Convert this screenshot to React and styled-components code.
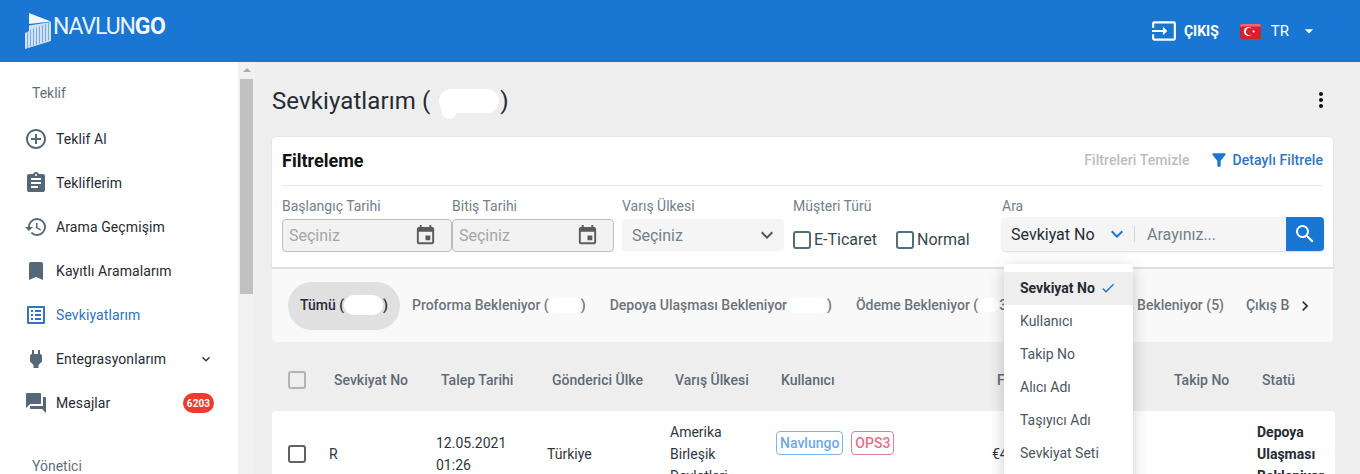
import React from "react";
import styled, { createGlobalStyle } from "styled-components";
import {
  MdAddCircleOutline, MdAssignment, MdHistory, MdBookmark, MdListAlt, MdPower, MdQuestionAnswer,
  MdExpandMore, MdInput, MdArrowDropDown, MdEvent, MdFilterAlt, MdSearch, MdCheck, MdMoreVert, MdChevronRight,
} from "react-icons/md";

const Global = createGlobalStyle`
  html, body { margin: 0; padding: 0; height: 100%; overflow: hidden; }
  body { font-family: Roboto, "Liberation Sans", sans-serif; background: #eeeeee; color: #262b33; }
  * { box-sizing: border-box; }
`;

const Page = styled.div`height: 474px; overflow: hidden; display: flex; flex-direction: column;`;
const Header = styled.header`
  height: 62px; flex: none; background: #1976d2; color: #fff; display: flex; align-items: center;
  padding: 0 41px 0 24px; justify-content: space-between;
`;
const Brand = styled.div`display: flex; align-items: flex-start; height: 36px; margin-top: -1px;`;
const BrandText = styled.div`
  font-family: Roboto, sans-serif; font-size: 23px; line-height: 28px; font-weight: 400; letter-spacing: -1.1px; margin: 0 0 0 2px; color: #eaf2fb;
  b { font-weight: 700; letter-spacing: -.5px; color: #f4f8fd; }
`;
const HeaderRight = styled.div`display: flex; align-items: center;`;
const Logout = styled.div`display: flex; align-items: center; gap: 7px; font-size: 14px; font-weight: 700; margin-right: 21px; svg { display: block; }`;
const Lang = styled.div`font-size: 15px; margin-left: 10px; margin-right: 10px;`;

const Body = styled.div`flex: 1; display: flex; min-height: 0;`;
const Side = styled.aside`width: 238px; flex: none; background: #fff; padding: 18px 24px 0 26px;`;
const SideLabel = styled.div`
  font-size: 14px; color: #5f6f7d; line-height: 26px; padding-left: 6px;
  margin-top: ${p => p.$top || 0}px; margin-bottom: 11px;
`;
const NavItem = styled.div`
  height: 44px; display: flex; align-items: center; font-size: 14px; letter-spacing: .1px;
  color: ${p => p.$active ? "#2f74c5" : "#262b33"};
  svg.lead { color: ${p => p.$active ? "#2f74c5" : "#546877"}; margin: 0 8px 0 -2px; flex: none; width: 24px; height: 24px; }
`;
const NavTrail = styled.span`margin-left: auto; display: flex; align-items: center; color: #333;`;
const Badge = styled.span`
  background: #f0392f; color: #fff; font-size: 10px; font-weight: 700; height: 20px; width: 31px; border-radius: 10px;
  display: flex; align-items: center; justify-content: center;
`;

const ScrollTrack = styled.div`width: 17px; flex: none; background: #f1f1f1; padding: 0 2px; display: flex; flex-direction: column; align-items: center;`;
const ScrollArrow = styled.div`
  width: 0; height: 0; border-left: 4px solid transparent; border-right: 4px solid transparent; border-bottom: 4px solid #a9a9a9;
  margin: 6px 0 7px;
`;
const ScrollThumb = styled.div`width: 13px; height: 215px; background: #c1c1c1;`;

const Main = styled.main`flex: 1; min-width: 0; padding: 0 25px 0 17px;`;
const TitleRow = styled.div`height: 75px; display: flex; align-items: center; justify-content: space-between;`;
const Title = styled.h1`margin: 0; font-size: 24px; font-weight: 400; color: #262b33; display: flex; align-items: center; letter-spacing: .1px; position: relative; top: 1px;`;
const TitleBlob = styled.span`
  position: relative; display: block; width: 60px; height: 24px; margin: 0 1px 0 9px; background: #fff; border-radius: 12px;
  &::after { content: ""; position: absolute; left: 2px; top: 14px; width: 16px; height: 16px; border-radius: 8px; background: #fff; }
`;
const Redact = styled.span`
  display: inline-block; width: ${p => p.$w}px; height: ${p => p.$h || 18}px; background: #fff; border-radius: ${p => (p.$h || 18) / 2}px; vertical-align: middle;
`;
const More = styled.div`display: flex; color: #111; margin-right: 2px; svg { display: block; }`;

const Card = styled.section`
  width: 1061px; background: #fff; border-radius: 4px 4px 0 0; padding: 0 10px; height: 132px; border-bottom: 2px solid #dfdfdf;
  box-shadow: 0 0 2px rgba(0,0,0,.12);
`;
const CardHead = styled.div`height: 49px; padding-bottom: 2px; display: flex; align-items: center; justify-content: space-between; border-bottom: 1px solid #e8e8e8;`;
const CardTitle = styled.div`font-size: 18px; font-weight: 700; color: #111;`;
const CardActions = styled.div`display: flex; align-items: center; font-size: 14px; font-weight: 500; letter-spacing: .08px;`;
const Clear = styled.span`color: #bdbdbd; margin-right: 19px;`;
const Detail = styled.span`color: #2f74c5; display: flex; align-items: center; gap: 4px; svg { color: #1976d2; display: block; }`;

const Fields = styled.div`display: grid; grid-template-columns: 170px 170px 171px 209px 322px; padding-top: 10px;`;
const Field = styled.div`padding-right: ${p => p.$pr || 0}px;`;
const Label = styled.div`font-size: 14px; line-height: 20px; color: #74808a; height: 23px;`;
const DateInput = styled.div`
  height: 33px; background: #f2f2f2; border: 1px solid #bdbdbd; border-radius: 4px; display: flex; align-items: center; justify-content: space-between;
  padding: 0 14px 0 6px; font-size: 16px; color: #a6a6a6; svg { color: #5b5b5b; }
`;
const Select = styled.div`
  height: 32px; background: #f5f5f5; border-radius: 4px; display: flex; align-items: center; justify-content: space-between;
  padding: 0 5px 0 10px; font-size: 16px; color: #74808a; svg { color: #455a64; }
`;
const Checks = styled.div`display: flex; gap: 19px; padding-top: 5px; height: 35px; align-items: center; font-size: 16px; color: #37474f;`;
const CheckItem = styled.label`display: flex; align-items: center; gap: 3px; & > span { margin-top: 2px; }`;
const Box = styled.span`
  width: 18px; height: 18px; border: 2px solid ${p => p.$c || "#546e7a"}; border-radius: 3px; flex: none; display: block;
`;
const SearchWrap = styled.div`
  height: 34px; margin-top: -2px; background: #f5f5f5; border-radius: 4px; display: flex; align-items: center; box-shadow: 0 1px 2px rgba(0,0,0,.15); overflow: hidden; font-size: 16px;
`;
const SearchSel = styled.div`width: 132px; display: flex; align-items: center; justify-content: space-between; padding: 0 5px 0 9px; color: #262b33; svg { color: #1976d2; }`;
const SearchDivider = styled.span`width: 1px; height: 16px; background: #d6d6d6;`;
const SearchInput = styled.div`flex: 1; padding-left: 12px; color: #74808a;`;
const SearchBtn = styled.div`width: 38px; height: 34px; background: #1976d2; color: #fff; display: flex; align-items: center; justify-content: center;`;

const Tabs = styled.div`
  width: 1061px; height: 73px; background: #f9f9f9; border-radius: 0 0 4px 4px; display: flex; align-items: center; padding: 0 13px 0 15px;
`;
const TabScroll = styled.div`flex: 1; display: flex; overflow: hidden; align-items: center; white-space: nowrap; padding-left: 0; margin-left: 0;`;
const Tab = styled.div`
  flex: none; font-size: 14px; font-weight: 500; height: 48px; padding: 0 12px 2px; display: flex; align-items: center; border-radius: 24px;
  margin-left: ${p => p.$ml ?? 0}px;
  color: ${p => p.$active ? "#262b33" : "#6c757d"};
  background: ${p => p.$active ? "#e0e0e0" : "transparent"};
`;
const TabChevron = styled.div`width: 30px; display: flex; justify-content: center; color: #333; svg { display: block; }`;

const COLS = "41px 107px 111px 123px 106px 216px 177px 88px 1fr";
const THead = styled.div`
  width: 1063px; height: 69px; padding: 6px 0 0 16px; display: grid; grid-template-columns: ${COLS}; align-items: center; font-size: 14px; font-weight: 500; color: #5f6b76;
`;
const Th = styled.div`padding-left: 5px; white-space: nowrap;`;
const TRow = styled.div`
  width: 1063px; height: 120px; background: #fff; border-radius: 4px; padding: 10px 0 0 16px; display: grid; grid-template-columns: ${COLS}; align-items: start; font-size: 14px; line-height: 22px; color: #2f3640;
`;
const Td = styled.div`height: 65px; display: flex; flex-direction: column; justify-content: center; font-weight: ${p => p.$bold ? 700 : 400}; color: ${p => p.$bold ? "#262b33" : "inherit"};`;
const Tags = styled.div`display: flex; gap: 8px; padding-top: 10px;`;
const Tag = styled.span`
  height: 24px; padding: 0 3px; border-radius: 4px; border: 1px solid ${p => p.$c}; color: ${p => p.$t}; font-weight: 500; display: flex; align-items: center; font-size: 14px;
`;

const Menu = styled.div`
  position: absolute; left: 1004px; top: 264px; width: 129px; height: 240px; background: #fff; border-radius: 4px; padding-top: 8px;
  box-shadow: 0 4px 16px rgba(0,0,0,.2); font-size: 14px; color: #4c5660; z-index: 5;
`;
const MenuItem = styled.div`
  height: 33px; display: flex; align-items: center; padding: 0 0 2px 16px; gap: 5px;
  background: ${p => p.$on ? "#eeeeee" : "transparent"}; font-weight: ${p => p.$on ? 700 : 400}; color: ${p => p.$on ? "#262b33" : "#4c5660"};
  svg { color: #1976d2; }
`;

const Mark = () => (
  <svg width="27" height="37" viewBox="0 0 27 37">
    <path d="M5 0 L27 8.5 L5 11 Z" fill="#f0f6fc" />
    <path d="M1 20 L5 18 L5 12.5 L27 9 L27 28 L1 36 Z" fill="#cfe2f5" />
    {[3, 6, 9, 12, 15, 18, 21, 24].map(x => <rect key={x} x={x} y={18 - (x - 3) * .38} width="1" height="17" fill="#1976d2" opacity=".5" />)}
  </svg>
);
const Flag = () => (
  <svg width="21" height="15" viewBox="0 0 21 15" style={{ display: "block", borderRadius: 2 }}>
    <rect width="21" height="15" fill="#d81f2e" />
    <rect width="21" height="2.5" fill="#ef6670" />
    <circle cx="8.5" cy="7.5" r="4.6" fill="#fff" />
    <circle cx="9.8" cy="7.5" r="3.8" fill="#d81f2e" />
    <circle cx="13.6" cy="7.5" r="1.1" fill="#fff" />
  </svg>
);

const nav = [
  [MdAddCircleOutline, "Teklif Al"], [MdAssignment, "Tekliflerim"], [MdHistory, "Arama Geçmişim"], [MdBookmark, "Kayıtlı Aramalarım"],
];

export default function App() {
  return (
    <Page>
      <Global />
      <Header>
        <Brand><Mark /><BrandText>NAVLUN<b>GO</b></BrandText></Brand>
        <HeaderRight>
          <Logout><MdInput size={26} />ÇIKIŞ</Logout>
          <Flag />
          <Lang>TR</Lang>
          <MdArrowDropDown size={20} />
        </HeaderRight>
      </Header>
      <Body>
        <Side>
          <SideLabel>Teklif</SideLabel>
          {nav.map(([I, t]) => <NavItem key={t}><I className="lead" />{t}</NavItem>)}
          <NavItem $active><MdListAlt className="lead" />Sevkiyatlarım</NavItem>
          <NavItem><MdPower className="lead" />Entegrasyonlarım<NavTrail><MdExpandMore size={16} /></NavTrail></NavItem>
          <NavItem><MdQuestionAnswer className="lead" />Mesajlar<NavTrail><Badge>6203</Badge></NavTrail></NavItem>
          <SideLabel $top={28}>Yönetici</SideLabel>
        </Side>
        <ScrollTrack><ScrollArrow /><ScrollThumb /></ScrollTrack>
        <Main>
          <TitleRow>
            <Title>Sevkiyatlarım (<TitleBlob />)</Title>
            <More><MdMoreVert size={24} /></More>
          </TitleRow>
          <Card>
            <CardHead>
              <CardTitle>Filtreleme</CardTitle>
              <CardActions>
                <Clear>Filtreleri Temizle</Clear>
                <Detail><MdFilterAlt size={20} />Detaylı Filtrele</Detail>
              </CardActions>
            </CardHead>
            <Fields>
              <Field><Label>Başlangıç Tarihi</Label><DateInput>Seçiniz<MdEvent size={23} /></DateInput></Field>
              <Field $pr={8}><Label>Bitiş Tarihi</Label><DateInput>Seçiniz<MdEvent size={23} /></DateInput></Field>
              <Field $pr={9}><Label>Varış Ülkesi</Label><Select>Seçiniz<MdExpandMore size={24} /></Select></Field>
              <Field>
                <Label>Müşteri Türü</Label>
                <Checks>
                  <CheckItem><Box />E-Ticaret</CheckItem>
                  <CheckItem><Box />Normal</CheckItem>
                </Checks>
              </Field>
              <Field>
                <Label>Ara</Label>
                <SearchWrap>
                  <SearchSel>Sevkiyat No<MdExpandMore size={24} /></SearchSel>
                  <SearchDivider />
                  <SearchInput>Arayınız...</SearchInput>
                  <SearchBtn><MdSearch size={24} /></SearchBtn>
                </SearchWrap>
              </Field>
            </Fields>
          </Card>
          <Tabs>
            <TabScroll>
              <Tab $active $ml={1}>Tümü (<Redact $w={39} $h={20} />)</Tab>
              <Tab>Proforma Bekleniyor (<Redact $w={32} $h={16} />)</Tab>
              <Tab>Depoya Ulaşması Bekleniyor<Redact $w={40} $h={16} />)</Tab>
              <Tab>Ödeme Bekleniyor (<Redact $w={21} $h={14} />3)</Tab>
              <Tab $ml={9}>Teslimat Çıkış Bekleniyor (5)</Tab>
              <Tab $ml={-2}>Çıkış Bekleniyor</Tab>
            </TabScroll>
            <TabChevron><MdChevronRight size={20} /></TabChevron>
          </Tabs>
          <THead>
            <Box $c="#b3b3b3" />
            <Th>Sevkiyat No</Th><Th>Talep Tarihi</Th><Th>Gönderici Ülke</Th><Th>Varış Ülkesi</Th><Th>Kullanıcı</Th><Th>Fiyat</Th><Th>Takip No</Th><Th>Statü</Th>
          </THead>
          <TRow>
            <Td><Box $c="#616161" /></Td>
            <Td>R</Td>
            <Td>12.05.2021<br />01:26</Td>
            <Td>Türkiye</Td>
            <Td>Amerika<br />Birleşik<br />Devletleri</Td>
            <Tags>
              <Tag $c="#7db5ea" $t="#6fa9e6">Navlungo</Tag>
              <Tag $c="#e57d94" $t="#e5708a">OPS3</Tag>
            </Tags>
            <Td>€4</Td>
            <Td />
            <Td $bold>Depoya<br />Ulaşması<br />Bekleniyor</Td>
          </TRow>
        </Main>
      </Body>
      <Menu>
        <MenuItem $on>Sevkiyat No<MdCheck size={16} /></MenuItem>
        <MenuItem>Kullanıcı</MenuItem>
        <MenuItem>Takip No</MenuItem>
        <MenuItem>Alıcı Adı</MenuItem>
        <MenuItem>Taşıyıcı Adı</MenuItem>
        <MenuItem>Sevkiyat Seti</MenuItem>
      </Menu>
    </Page>
  );
}
